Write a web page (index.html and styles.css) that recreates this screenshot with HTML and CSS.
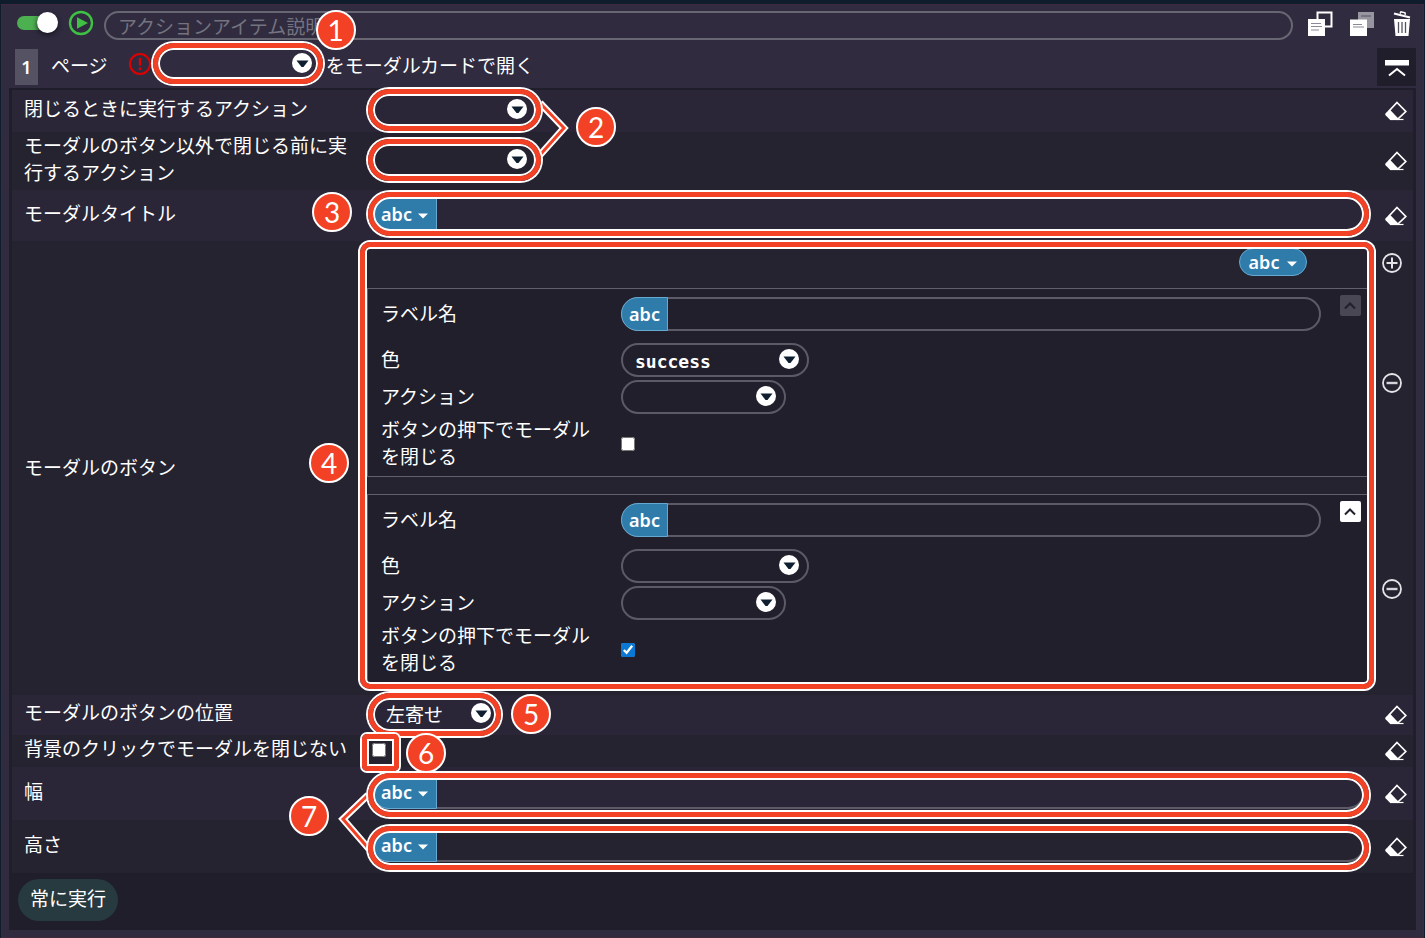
FILE: index.html
```html
<!DOCTYPE html>
<html lang="ja">
<head>
    <meta charset="UTF-8">
    <meta name="viewport" content="width=device-width, initial-scale=1.0">
    <title>モーダルカードで開く</title>
    <link rel="stylesheet" href="styles.css">
</head>
<body>
    <!-- shared icons -->
    <svg class="sprite" aria-hidden="true">
        <symbol id="arrow" viewBox="0 0 20 20">
            <circle cx="10" cy="10" r="10" fill="#fff"/>
            <path d="M4.5 7.5h12L11.500 14h-2z" fill="#0f1f30"/>
        </symbol>
        <symbol id="caret" viewBox="0 0 10 6">
            <path d="M0 0.5h10L5 5.5z" fill="#fff"/>
        </symbol>
        <symbol id="eraser" viewBox="0 0 22 20">
            <path d="M12 1.500 20.800 10.500 12.800 18 4.500 9.500z" fill="none" stroke="#fff" stroke-width="1.7"/>
            <path d="M4.500 8.500.600 12.200q-.800 1 0 2l4.400 4.600h8.500z" fill="#fff"/>
            <path d="M5 18.500h13.500" stroke="#fff" stroke-width="1.2"/>
        </symbol>
        <symbol id="plus" viewBox="0 0 20 20">
            <circle cx="10" cy="10" r="9" fill="none" stroke="#e4e4e8" stroke-width="1.8"/>
            <path d="M4.5 10h11M10 4.5v11" stroke="#e4e4e8" stroke-width="2"/>
        </symbol>
        <symbol id="minus" viewBox="0 0 20 20">
            <circle cx="10" cy="10" r="9" fill="none" stroke="#e4e4e8" stroke-width="1.8"/>
            <path d="M4.5 10h11" stroke="#d4d4da" stroke-width="2.4"/>
        </symbol>
        <symbol id="up" viewBox="0 0 20 20">
            <path d="M5 12.5 10 7.5l5 5" fill="none" stroke="currentColor" stroke-width="2"/>
        </symbol>
    </svg>

    <div class="card">
        <div class="header">
            <input type="checkbox" class="switch" aria-label="有効" checked>
            <button class="icon-btn" aria-label="実行">
                <svg width="26" height="26" viewBox="0 0 26 26"><circle cx="13" cy="13" r="11" fill="none" stroke="#3fc243" stroke-width="2.4"/><path d="M9 7.2v11.6L20 13z" fill="#3fc243"/></svg>
            </button>
            <input type="text" class="description" aria-label="アクションアイテム説明" placeholder="アクションアイテム説明">
            <div class="tools">
                <button class="icon-btn" aria-label="複製">
                    <svg width="25" height="25" viewBox="0 0 25 25"><path d="M9.5 1.500h14v14h-14z" fill="none" stroke="#fff" stroke-width="2"/><path d="M0 8h17v17H0z" fill="#fff"/><path d="M3 12.500h10M3 15.500h11M3 19h8" stroke="#8b8995" stroke-width="1.200"/></svg>
                </button>
                <button class="icon-btn" aria-label="コピー">
                    <svg width="25" height="25" viewBox="0 0 25 25"><path d="M8 1h16v16H8z" fill="#97959f"/><path d="M11 5h10" stroke="#6a6875" stroke-width="1.500"/><path d="M0 8.500h17V25H0z" fill="#fff"/><path d="M3 13.500h9M3 16h11" stroke="#8b8995" stroke-width="1.200"/></svg>
                </button>
                <button class="icon-btn" aria-label="削除">
                    <svg width="20" height="25" viewBox="0 0 20 25"><path d="M2 2.500 18 6.500" stroke="#fff" stroke-width="2.200"/><path d="M8 2.500 9 .800l4 1 .3 2" fill="none" stroke="#fff" stroke-width="1.500"/><path d="M2 8h16l-1.500 17h-13z" fill="#fff"/><path d="M6.500 11v11M10 11v11M13.500 11v11" stroke="#55535f" stroke-width="1.300"/></svg>
                </button>
            </div>
        </div>

        <div class="title-row">
            <span class="index">1</span>
            <label class="page-label" for="page">ページ</label>
            <svg class="alert" width="22" height="22" viewBox="0 0 22 22"><circle cx="11" cy="11" r="10" fill="none" stroke="#e00000" stroke-width="2"/><path d="M11 5v7.500M11 14.500V17" stroke="#e00000" stroke-width="2.400"/></svg>
            <span class="select mark">
                <select id="page"><option></option></select>
                <svg class="arrow"><use href="#arrow"/></svg>
                <span class="badge badge-1">1</span>
            </span>
            <span class="title-text">をモーダルカードで開く</span>
            <button class="collapse" aria-label="折りたたむ">
                <svg width="24" height="17" viewBox="0 0 24 17"><path d="M0 0h24v5.500H0z" fill="#fff"/><path d="M4 15.500 12 9l8 6.500" fill="none" stroke="#fff" stroke-width="2"/></svg>
            </button>
        </div>

        <div class="panel">
            <div class="row h-42">
                <label for="closeAction">閉じるときに実行するアクション</label>
                <div class="field">
                    <span class="select mark">
                        <select id="closeAction"><option></option></select>
                        <svg class="arrow"><use href="#arrow"/></svg>
                        <svg class="link link-2" viewBox="0 0 32 58"><path class="edge" d="M3 3 27 28 3 55"/><path class="core" d="M3 3 27 28 3 55"/></svg>
                        <span class="badge badge-2">2</span>
                    </span>
                </div>
                <button class="icon-btn" aria-label="クリア"><svg class="eraser"><use href="#eraser"/></svg></button>
            </div>

            <div class="row h-58">
                <label for="beforeClose">モーダルのボタン以外で閉じる前に実行するアクション</label>
                <div class="field">
                    <span class="select mark">
                        <select id="beforeClose"><option></option></select>
                        <svg class="arrow"><use href="#arrow"/></svg>
                    </span>
                </div>
                <button class="icon-btn" aria-label="クリア"><svg class="eraser"><use href="#eraser"/></svg></button>
            </div>

            <div class="row h-51">
                <label for="modalTitle">モーダルタイトル</label>
                <div class="field">
                    <div class="group-wrap mark mark-title">
                        <div class="group">
                            <button class="type">abc <svg class="caret"><use href="#caret"/></svg></button>
                            <input type="text" id="modalTitle">
                        </div>
                        <span class="badge badge-3">3</span>
                    </div>
                </div>
                <button class="icon-btn" aria-label="クリア"><svg class="eraser"><use href="#eraser"/></svg></button>
            </div>

            <div class="row row-buttons">
                <span class="label">モーダルのボタン</span>
                <div class="buttons">
                    <div class="buttons-head">
                        <button class="pill">abc <svg class="caret"><use href="#caret"/></svg></button>
                    </div>
                    <button class="icon-btn add" aria-label="追加"><svg class="round"><use href="#plus"/></svg></button>

                    <div class="item">
                        <div class="item-row first">
                            <label for="label1">ラベル名</label>
                            <div class="group">
                                <button class="type short">abc</button>
                                <input type="text" id="label1">
                            </div>
                            <button class="move" aria-label="上へ" disabled><svg width="20" height="20"><use href="#up"/></svg></button>
                        </div>
                        <div class="item-row">
                            <label for="color1">色</label>
                            <span class="select wide">
                                <select id="color1" class="mono"><option>success</option></select>
                                <svg class="arrow"><use href="#arrow"/></svg>
                            </span>
                        </div>
                        <div class="item-row">
                            <label for="action1">アクション</label>
                            <span class="select">
                                <select id="action1"><option></option></select>
                                <svg class="arrow"><use href="#arrow"/></svg>
                            </span>
                        </div>
                        <div class="item-row">
                            <label for="close1">ボタンの押下でモーダルを閉じる</label>
                            <input type="checkbox" id="close1" class="check">
                        </div>
                    </div>
                    <button class="icon-btn" aria-label="削除"><svg class="round"><use href="#minus"/></svg></button>

                    <div class="item last">
                        <div class="item-row first">
                            <label for="label2">ラベル名</label>
                            <div class="group">
                                <button class="type short">abc</button>
                                <input type="text" id="label2">
                            </div>
                            <button class="move" aria-label="上へ"><svg width="20" height="20"><use href="#up"/></svg></button>
                        </div>
                        <div class="item-row">
                            <label for="color2">色</label>
                            <span class="select wide">
                                <select id="color2" class="mono"><option></option></select>
                                <svg class="arrow"><use href="#arrow"/></svg>
                            </span>
                        </div>
                        <div class="item-row">
                            <label for="action2">アクション</label>
                            <span class="select">
                                <select id="action2"><option></option></select>
                                <svg class="arrow"><use href="#arrow"/></svg>
                            </span>
                        </div>
                        <div class="item-row">
                            <label for="close2">ボタンの押下でモーダルを閉じる</label>
                            <input type="checkbox" id="close2" class="check" checked>
                        </div>
                    </div>
                    <button class="icon-btn" aria-label="削除"><svg class="round"><use href="#minus"/></svg></button>

                    <div class="frame mark"><span class="badge badge-4">4</span></div>
                </div>
            </div>

            <div class="row h-40">
                <label for="position">モーダルのボタンの位置</label>
                <div class="field">
                    <span class="select narrow mark">
                        <select id="position"><option>左寄せ</option></select>
                        <svg class="arrow"><use href="#arrow"/></svg>
                        <span class="badge badge-5">5</span>
                    </span>
                </div>
                <button class="icon-btn" aria-label="クリア"><svg class="eraser"><use href="#eraser"/></svg></button>
            </div>

            <div class="row h-32">
                <label for="backdrop">背景のクリックでモーダルを閉じない</label>
                <div class="field">
                    <span class="check-wrap mark">
                        <input type="checkbox" id="backdrop" class="check">
                        <span class="badge badge-6">6</span>
                    </span>
                </div>
                <button class="icon-btn" aria-label="クリア"><svg class="eraser"><use href="#eraser"/></svg></button>
            </div>

            <div class="row h-53">
                <label for="width">幅</label>
                <div class="field">
                    <div class="group-wrap mark mark-size">
                        <div class="group">
                            <button class="type">abc <svg class="caret"><use href="#caret"/></svg></button>
                            <input type="text" id="width">
                        </div>
                        <svg class="link link-7" viewBox="0 0 34 60"><path class="edge" d="M30 3 5 27 31 57"/><path class="core" d="M30 3 5 27 31 57"/></svg>
                        <span class="badge badge-7">7</span>
                    </div>
                </div>
                <button class="icon-btn" aria-label="クリア"><svg class="eraser"><use href="#eraser"/></svg></button>
            </div>

            <div class="row h-53">
                <label for="height">高さ</label>
                <div class="field">
                    <div class="group-wrap mark mark-size">
                        <div class="group">
                            <button class="type">abc <svg class="caret"><use href="#caret"/></svg></button>
                            <input type="text" id="height">
                        </div>
                    </div>
                </div>
                <button class="icon-btn" aria-label="クリア"><svg class="eraser"><use href="#eraser"/></svg></button>
            </div>

            <div class="footer">
                <button class="always">常に実行</button>
            </div>
        </div>
    </div>
</body>
</html>
```
FILE: styles.css
```css
* {
    box-sizing: border-box;
}

body {
    margin: 0;
    padding: 4px 1px 1px 1px;
    background-color: #0f1c2b;
    color: #ffffff;
    font-family: "Noto Sans", "Noto Sans CJK JP", sans-serif;
    font-size: 19px;
    line-height: 27px;
}

button, input, select {
    font: inherit;
    color: inherit;
    margin: 0;
}

button {
    padding: 0;
    border: none;
    background: none;
    cursor: pointer;
}

svg {
    display: block;
}

.sprite {
    position: absolute;
    width: 0;
    height: 0;
}

.card {
    border: 1px solid #40293f;
    background-color: #302b3f;
    padding: 0 7px 7px;
}

.icon-btn {
    display: flex;
    align-items: center;
    justify-content: center;
}

/* top bar */
.header {
    display: flex;
    align-items: center;
    height: 40px;
    padding: 0 4px 0 8px;
}

.switch {
    appearance: none;
    display: flex;
    align-items: center;
    justify-content: flex-end;
    width: 41px;
    height: 14px;
    margin: 0 10px 5px 0;
    border-radius: 7px;
    background-color: #4caf50;
}

.switch::before {
    content: "";
    width: 21px;
    height: 21px;
    border-radius: 50%;
    background-color: #ffffff;
    box-shadow: 0 2px 5px #17151f;
}

.header > .icon-btn {
    margin: 0 10px 5px 0;
}

.description {
    flex: 1;
    min-width: 0;
    height: 29px;
    padding: 4px 12px 0;
    border: 2px solid #686673;
    border-radius: 15px;
    background: none;
}

.description::placeholder {
    color: #75737f;
}

.tools {
    display: flex;
    gap: 17px;
    margin-left: 15px;
    padding-bottom: 3px;
}

.title-row {
    display: flex;
    align-items: center;
    height: 43px;
    padding: 0 0 5px 6px;
}

.index {
    width: 23px;
    height: 36px;
    margin-top: 5px;
    background-color: #555363;
    font-size: 18px;
    font-weight: 600;
    line-height: 36px;
    text-align: center;
}

.page-label,
.title-text {
    padding-top: 4px;
}

.page-label {
    margin: 0 21px 0 13px;
}

.alert {
    margin-right: 6px;
}

.title-row .select {
    margin-right: 4px;
}

.collapse {
    display: flex;
    align-items: center;
    justify-content: center;
    width: 39px;
    height: 38px;
    margin: 5px 0 0 auto;
    padding-top: 4px;
    background-color: #201e2b;
}

/* rows */
.panel {
    padding: 2px 3px 9px;
    background-color: #201e2b;
}

.row {
    display: grid;
    grid-template-columns: 336px 1fr 34px;
    align-items: center;
    padding-left: 12px;
    background-color: #2a2637;
}

.row:nth-child(even) {
    background-color: #252330;
}

.row > label,
.field {
    padding-bottom: 3px;
}

.field {
    display: flex;
    padding-left: 12px;
    padding-right: 14px;
}

.h-32 { min-height: 32px; }
.h-40 { min-height: 40px; }
.h-42 { min-height: 42px; }
.h-51 { min-height: 51px; }
.h-53 { min-height: 53px; }
.h-58 { min-height: 58px; }

.eraser {
    width: 22px;
    height: 20px;
}

.round {
    width: 20px;
    height: 20px;
}

/* controls */
.select {
    position: relative;
    display: block;
    width: 165px;
    height: 34px;
}

.select.wide {
    width: 188px;
}

.select.narrow {
    width: 129px;
}

.select select {
    appearance: none;
    display: block;
    width: 100%;
    height: 100%;
    padding: 3px 12px 0;
    border: 2px solid #5c5a67;
    border-radius: 17px;
    background: none;
}

.mark select {
    border-color: transparent;
}

.select .mono {
    font-family: "DejaVu Sans Mono", monospace;
    font-size: 18px;
    font-weight: bold;
}

.arrow {
    position: absolute;
    top: 6px;
    right: 10px;
    width: 20px;
    height: 20px;
    pointer-events: none;
}

.group-wrap {
    flex: 1;
}

.group {
    display: flex;
    flex: 1;
    height: 34px;
    border: 2px solid #5c5a67;
    border-radius: 17px;
}

.group input {
    flex: 1;
    min-width: 0;
    border: none;
    background: none;
}

.type, .pill {
    display: flex;
    align-items: center;
    justify-content: center;
    gap: 6px;
    border: 1px solid #65a9d0;
    background-color: #2f7cab;
    font-size: 18px;
    font-weight: 600;
}

.type {
    width: 65px;
    margin: -2px 0 -2px -2px;
    border-radius: 17px 0 0 17px;
}

.type.short {
    width: 47px;
}

.pill {
    gap: 8px;
    width: 68px;
    height: 28px;
    border-radius: 14px;
}

.caret {
    width: 10px;
    height: 6px;
    margin-top: 4px;
}

.check {
    width: 14px;
    height: 14px;
    accent-color: #0a78d4;
}

/* modal button list */
.row-buttons {
    grid-template-columns: 336px 1fr;
}

.buttons {
    position: relative;
    display: grid;
    grid-template-columns: 1fr 46px;
    align-items: center;
    padding: 7px 0 12px 7px;
}

.buttons > .icon-btn {
    justify-self: center;
    margin-left: 4px;
}

.buttons > .add {
    margin-bottom: 10px;
}

.buttons-head {
    display: flex;
    justify-content: flex-end;
    align-items: flex-start;
    height: 40px;
    padding-right: 60px;
}

.item {
    padding: 8px 6px 5px 13px;
    border: 1px solid #62606c;
    border-right: none;
    background-color: #201f2b;
}

.item.last {
    margin-top: 17px;
}

.item.last + .icon-btn {
    margin-top: 17px;
}

.item-row {
    display: flex;
    align-items: center;
    min-height: 34px;
    margin-top: 3px;
}

.item-row.first {
    align-items: flex-start;
    margin: 0 0 12px;
}

.item-row label {
    width: 216px;
    margin-right: 24px;
}

.item-row.first label {
    padding-top: 4px;
}

.move {
    width: 21px;
    height: 21px;
    margin: -2px 0 0 19px;
    border-radius: 2px;
    background-color: #ffffff;
    color: #201f2b;
}

.move:disabled {
    background-color: #484753;
}

/* numbered callouts */
.mark {
    position: relative;
}

.mark::before {
    content: "";
    position: absolute;
    z-index: 1;
    inset: -4px;
    border: 5px solid #f24125;
    border-radius: 24px;
    box-shadow: 0 0 0 2px #ffffff, inset 0 0 0 2px #ffffff;
    pointer-events: none;
}

.title-row .mark::before {
    inset: -4px -1px -3px -4px;
}

.mark-title::before {
    inset: -5px -4px;
}

.mark-size::before {
    inset: -2px -4px -8px;
}

.narrow.mark::before {
    inset: -4px 0 -5px -4px;
}

.check-wrap.mark {
    height: 14px;
    display: flex;
}

.check-wrap.mark::before {
    inset: -9px -13px -14px -10px;
    border-radius: 5px;
}

.frame.mark {
    position: absolute;
    grid-area: 1 / 1 / 4 / 2;
    inset: 0;
    pointer-events: none;
}

.frame.mark::before {
    inset: -6px -7px;
    border-radius: 10px;
}

.badge {
    position: absolute;
    z-index: 3;
    width: 40px;
    height: 40px;
    border: 2px solid #ffffff;
    border-radius: 50%;
    background-color: #f24125;
    font-family: Lato, sans-serif;
    font-size: 28px;
    line-height: 36px;
    text-align: center;
}

.badge-1 { top: -37px; right: -34px; }
.badge-2 { top: 14px; right: -79px; }
.badge-3 { top: -5px; left: -60px; }
.badge-4 { top: 195px; left: -58px; }
.badge-5 { top: -3px; right: -50px; }
.badge-6 { top: -10px; left: 34px; }
.badge-7 { top: 21px; left: -83px; }

.link {
    position: absolute;
    fill: none;
}

.link .edge {
    stroke: #ffffff;
    stroke-width: 7;
}

.link .core {
    stroke: #f24125;
    stroke-width: 3;
}

.link-2 {
    top: 7px;
    right: -32px;
    width: 32px;
    height: 58px;
}

.link-7 {
    top: 17px;
    left: -34px;
    width: 34px;
    height: 60px;
}

/* footer */
.footer {
    padding: 6px 6px 0;
}

.always {
    height: 42px;
    padding: 0 12px 2px;
    border-radius: 21px;
    background-color: #263a40;
}
```
